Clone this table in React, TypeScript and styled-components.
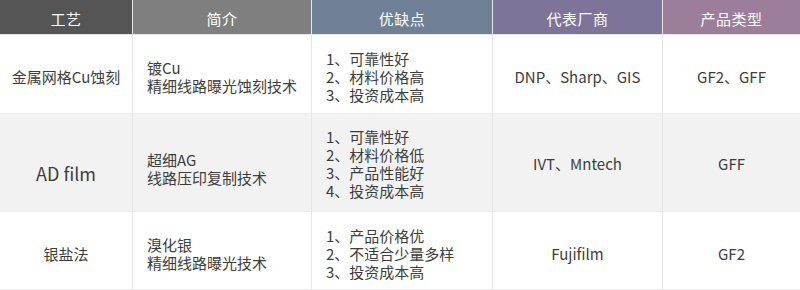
import React from "react";
import styled, { createGlobalStyle } from "styled-components";

const Global = createGlobalStyle`
  html, body { margin: 0; padding: 0; background: #fff; }
  body { font-family: "Noto Sans CJK SC", "Noto Sans", sans-serif; }
`;

const Table = styled.div`
  width: 800px;
  display: grid;
  grid-template-columns: 133px 179px 181px 170px 137px;
  grid-template-rows: 35px 79px 98px 78px;
  background: #fff;
`;

const HeadCell = styled.div<{ $bg: string; $last?: boolean }>`
  background: ${(p) => p.$bg};
  color: #fff;
  font-size: 15px;
  display: flex;
  align-items: center;
  justify-content: center;
  padding-top: 2px;
  border-right: ${(p) => (p.$last ? "none" : "1px solid #e6e6e6")};
  border-bottom: 1px solid #e6e6e6;
  box-sizing: border-box;
  letter-spacing: 0.5px;
`;

const Cell = styled.div<{
  $gray?: boolean;
  $align?: "center" | "left";
  $big?: boolean;
  $last?: boolean;
  $shift?: number;
}>`
  background: ${(p) => (p.$gray ? "#f2f2f2" : "#fff")};
  color: #3d3d3d;
  font-size: ${(p) => (p.$big ? "18px" : "15px")};
  line-height: 18px;
  display: flex;
  flex-direction: column;
  justify-content: center;
  align-items: ${(p) => (p.$align === "left" ? "flex-start" : "center")};
  text-align: ${(p) => (p.$align === "left" ? "left" : "center")};
  padding-left: ${(p) => (p.$align === "left" ? "14px" : "0")};
  padding-top: ${(p) => p.$shift ?? 0}px;
  border-right: ${(p) => (p.$last ? "none" : "1px solid #e4e4e4")};
  border-bottom: 1px solid #ececec;
  box-sizing: border-box;
`;

const heads = [
  { t: "工艺", c: "#555555" },
  { t: "简介", c: "#7f7f7f" },
  { t: "优缺点", c: "#6e7f96" },
  { t: "代表厂商", c: "#7e7499" },
  { t: "产品类型", c: "#9c7d9a" },
];

const rows = [
  {
    name: "金属网格Cu蚀刻",
    big: false,
    intro: ["镀Cu", "精细线路曝光蚀刻技术"],
    pros: ["1、可靠性好", "2、材料价格高", "3、投资成本高"],
    vendor: "DNP、Sharp、GIS",
    type: "GF2、GFF",
    shifts: [6, 6, 6, 6, 6],
  },
  {
    name: "AD film",
    big: true,
    intro: ["超细AG", "线路压印复制技术"],
    pros: ["1、可靠性好", "2、材料价格低", "3、产品性能好", "4、投资成本高"],
    vendor: "IVT、Mntech",
    type: "GFF",
    shifts: [20, 12, 3, 2, 2],
  },
  {
    name: "银盐法",
    big: false,
    intro: ["溴化银", "精细线路曝光技术"],
    pros: ["1、产品价格优", "2、不适合少量多样", "3、投资成本高"],
    vendor: "Fujifilm",
    type: "GF2",
    shifts: [6, 6, 6, 6, 6],
  },
];

export default function App() {
  return (
    <>
      <Global />
      <Table>
        {heads.map((h, i) => (
          <HeadCell key={h.t} $bg={h.c} $last={i === heads.length - 1}>
            {h.t}
          </HeadCell>
        ))}
        {rows.map((r, i) => {
          const gray = i === 1;
          return (
            <React.Fragment key={r.name}>
              <Cell $gray={gray} $big={r.big} $shift={r.shifts[0]}>
                {r.name}
              </Cell>
              <Cell $gray={gray} $align="left" $shift={r.shifts[1]}>
                {r.intro.map((l) => (
                  <div key={l}>{l}</div>
                ))}
              </Cell>
              <Cell $gray={gray} $align="left" $shift={r.shifts[2]}>
                {r.pros.map((l) => (
                  <div key={l}>{l}</div>
                ))}
              </Cell>
              <Cell $gray={gray} $shift={r.shifts[3]}>
                {r.vendor}
              </Cell>
              <Cell $gray={gray} $last $shift={r.shifts[4]}>
                {r.type}
              </Cell>
            </React.Fragment>
          );
        })}
      </Table>
    </>
  );
}
